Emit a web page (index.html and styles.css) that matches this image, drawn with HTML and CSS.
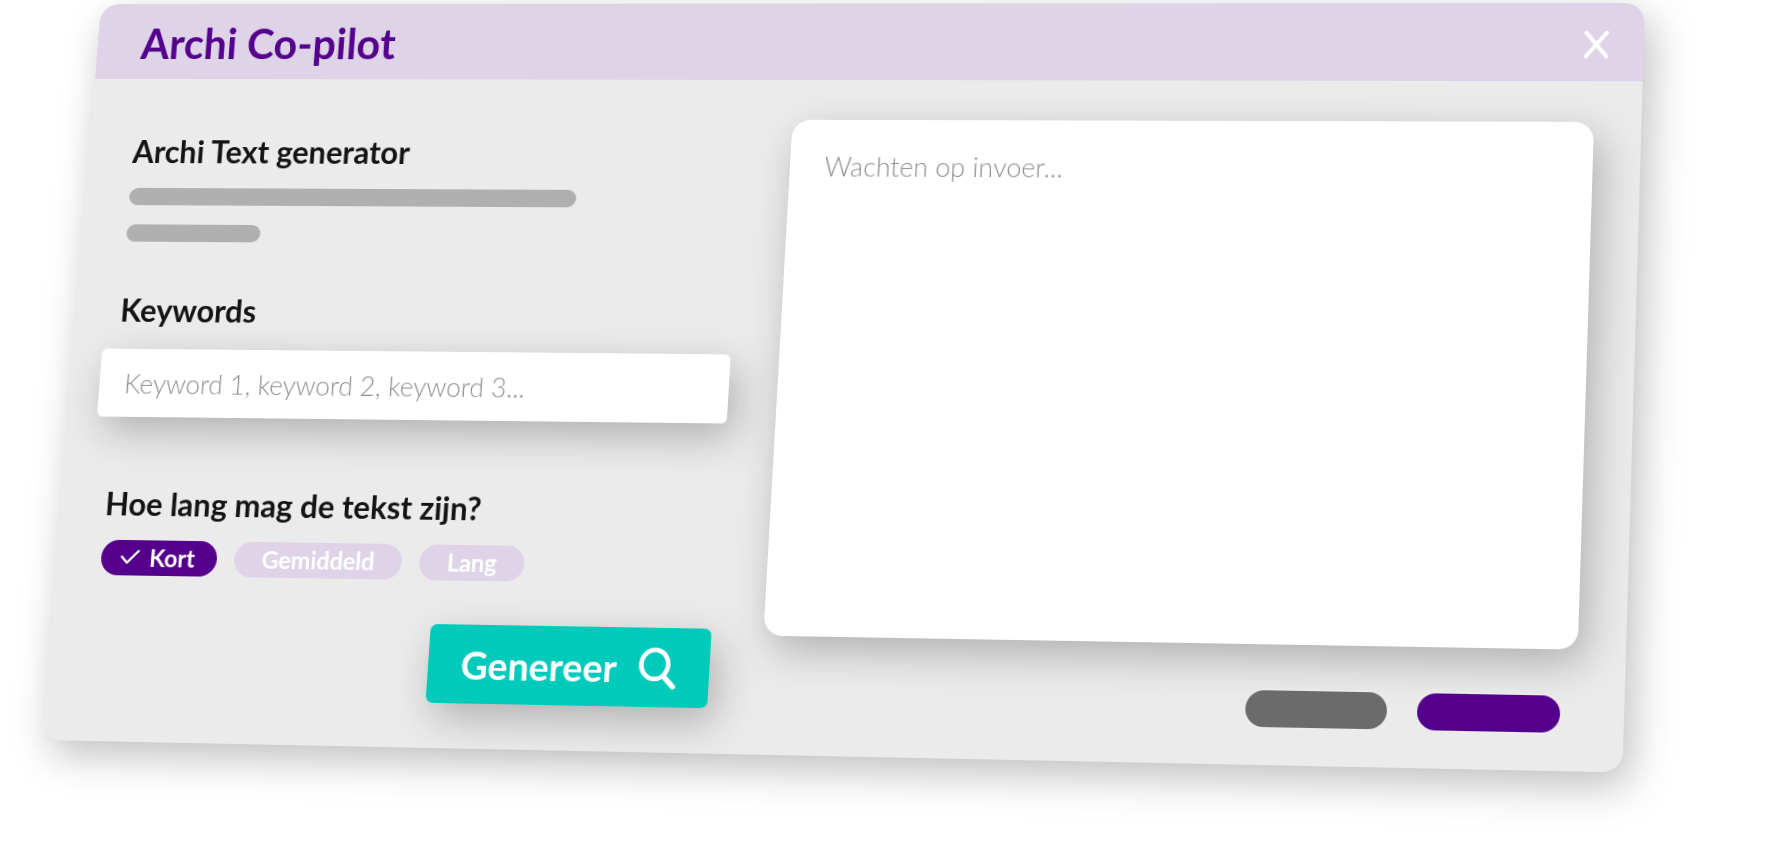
FILE: index.html
```
<!DOCTYPE html>
<html lang="nl">
<head>
    <meta charset="UTF-8">
    <meta name="viewport" content="width=device-width, initial-scale=1.0">
    <title>Archi Co-pilot</title>
    <link rel="stylesheet" href="styles.css">
</head>
<body>
    <main class="stage">
        <div class="window">
            <header class="window-header">
                <h1>Archi Co-pilot</h1>
                <button type="button" class="close" aria-label="Sluiten">
                    <svg width="26" height="30" viewBox="0 0 26 30" fill="none" stroke="currentColor" stroke-width="4" stroke-linecap="round">
                        <path d="M3 3 L23 27 M23 3 L3 27"/>
                    </svg>
                </button>
            </header>

            <form class="window-body">
                <section class="settings">
                    <h2>Archi Text generator</h2>
                    <div class="line line-long"></div>
                    <div class="line line-short"></div>

                    <label class="field-title keywords-title" for="keywords">Keywords</label>
                    <input type="text" id="keywords" class="keywords" placeholder="Keyword 1, keyword 2, keyword 3...">

                    <fieldset class="length">
                        <legend class="field-title">Hoe lang mag de tekst zijn?</legend>
                        <div class="options">
                            <label class="option">
                                <input type="radio" name="length" value="kort" checked>
                                <svg class="check" width="20" height="16" viewBox="0 0 20 16" fill="none" stroke="currentColor" stroke-width="2.4" stroke-linecap="round" stroke-linejoin="round">
                                    <path d="M1.5 8 L7 14 L18.5 2"/>
                                </svg>
                                <span>Kort</span>
                            </label>
                            <label class="option">
                                <input type="radio" name="length" value="gemiddeld">
                                <span>Gemiddeld</span>
                            </label>
                            <label class="option">
                                <input type="radio" name="length" value="lang">
                                <span>Lang</span>
                            </label>
                        </div>
                    </fieldset>

                    <button type="button" class="generate">
                        <span>Genereer</span>
                        <svg width="38" height="42" viewBox="0 0 38 42" fill="none" stroke="currentColor" stroke-width="4.6" stroke-linecap="round">
                            <ellipse cx="16" cy="17.5" rx="13.5" ry="14.5"/>
                            <path d="M25 29 L35 39.5" stroke-width="5.4"/>
                        </svg>
                    </button>
                </section>

                <section class="output">
                    <textarea class="result" aria-label="Resultaat" placeholder="Wachten op invoer..."></textarea>
                    <div class="actions">
                        <button type="button" class="action action-gray" aria-label="Annuleren"></button>
                        <button type="button" class="action action-purple" aria-label="Opslaan"></button>
                    </div>
                </section>
            </form>
        </div>
    </main>
</body>
</html>
```
FILE: styles.css
```
:root {
    --purple: #54008c;
    --lilac: #ded3e7;
    --teal: #00cbbb;
    --shadow: 8px 14px 40px rgba(0, 0, 0, 0.25);
}
* {
    box-sizing: border-box;
}
body {
    margin: 0;
    background: white;
    color: #141414;
    font-family: Lato, sans-serif;
}
button, input, textarea {
    font-family: inherit;
    border: none;
}
button {
    cursor: pointer;
}
.stage {
    padding: 4px 115px 82px 101px;
}

/* the whole window leans back in perspective */
.window {
    background: #ebebeb;
    border-radius: 20px;
    box-shadow: var(--shadow);
    transform-origin: 0 0;
    transform: matrix3d(
        0.9428, -0.00061, 0, -0.0000271,
        -0.07517, 0.94577, 0, -0.0000308,
        0, 0, 1, 0,
        0, 0, 0, 1);
}
.window-header {
    display: flex;
    align-items: center;
    justify-content: space-between;
    height: 79px;
    padding: 4px 33px 0 46px;
    background: var(--lilac);
    border-radius: 20px 20px 0 0;
}
h1 {
    margin: 0;
    color: var(--purple);
    font-size: 43px;
    line-height: 52px;
}
.close {
    display: flex;
    padding: 0;
    background: none;
    color: white;
}
.window-body {
    display: grid;
    grid-template-columns: 647fr 796fr;
    gap: 49px;
    padding: 41px 46px 37px 30px;
}
.settings {
    display: flex;
    flex-direction: column;
    align-items: flex-start;
    padding: 15px 0 8px;
}
h2, .field-title {
    margin: 0;
    padding: 0 16px;
    font-size: 32px;
    font-weight: bold;
    line-height: 40px;
}
.line {
    height: 18px;
    margin: 18px 0 0 16px;
    border-radius: 9px;
    background: #b0b0b0;
}
.line-long {
    width: 464px;
}
.line-short {
    width: 140px;
    margin-top: 20px;
}
.keywords-title {
    margin-top: 51px;
}
.keywords {
    width: 100%;
    height: 70px;
    margin-top: 20px;
    padding: 0 26px;
    border-radius: 6px;
    box-shadow: var(--shadow);
    font-size: 27px;
    font-weight: 300;
}
::placeholder {
    color: #909090;
    opacity: 1;
}
.length {
    margin: 69px 0 0;
    padding: 0;
    border: none;
}
.options {
    display: flex;
    gap: 18px;
    padding: 17px 0 0 16px;
}
.option {
    position: relative;
    display: flex;
    align-items: center;
    gap: 10px;
    height: 36px;
    padding: 0 28px 2px;
    border-radius: 18px;
    background: var(--lilac);
    color: white;
    font-size: 24px;
    font-weight: bold;
    cursor: pointer;
}
.option input {
    position: absolute;
    opacity: 0;
}
.option:has(input:checked) {
    padding: 0 23px 2px 20px;
    background: var(--purple);
}
.generate {
    display: flex;
    align-items: center;
    align-self: flex-end;
    gap: 22px;
    height: 79px;
    margin: 44px 3px 0 0;
    padding: 0 33px;
    border-radius: 7px;
    background: var(--teal);
    box-shadow: var(--shadow);
    color: white;
    font-size: 38px;
    font-weight: bold;
}
.output {
    display: flex;
    flex-direction: column;
}
.result {
    flex: 1;
    padding: 30px 35px;
    border-radius: 19px;
    box-shadow: var(--shadow);
    font-size: 27px;
    font-weight: 300;
    line-height: 36px;
    resize: none;
}
.actions {
    display: flex;
    justify-content: flex-end;
    gap: 29px;
    padding: 45px 15px 0 0;
}
.action {
    width: 137px;
    height: 36px;
    border-radius: 18px;
    box-shadow: 0 0 2px #f8f8f8;
}
.action-gray {
    background: #6b6b6b;
}
.action-purple {
    background: var(--purple);
}
```
